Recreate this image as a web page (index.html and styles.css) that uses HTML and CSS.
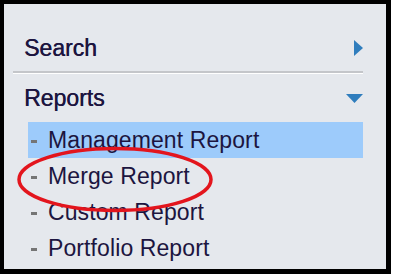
FILE: index.html
```html
<!DOCTYPE html>
<html lang="en">
<head>
  <meta charset="UTF-8">
  <title>Reports Menu</title>
  <link rel="stylesheet" href="styles.css">
</head>
<body>
  <div class="frame">
    <div class="panel">
      <div class="section-head">
        <span>Search</span>
        <svg class="arrow-right" width="9" height="16" viewBox="0 0 9 16"><polygon points="0,0 9,8 0,16" fill="#2f7dbd"/></svg>
      </div>
      <div class="separator"></div>
      <div class="section-head">
        <span>Reports</span>
        <svg class="arrow-down" width="17" height="9" viewBox="0 0 17 9"><polygon points="0,0 17,0 8.5,9" fill="#2f7dbd"/></svg>
      </div>
      <ul class="items">
        <li class="item active"><span class="dash"></span>Management Report</li>
        <li class="item"><span class="dash"></span>Merge Report</li>
        <li class="item"><span class="dash"></span>Custom Report</li>
        <li class="item"><span class="dash"></span>Portfolio Report</li>
      </ul>
    </div>
    <svg class="highlight-ring" width="200" height="70" viewBox="0 0 200 70">
      <ellipse cx="98" cy="33.5" rx="96" ry="31" fill="none" stroke="#e3151d" stroke-width="3.5"/>
    </svg>
  </div>
</body>
</html>
```

FILE: styles.css
```css
body {
  margin: 0;
  background-color: #fff;
  font-family: "Liberation Sans", Arial, sans-serif;
}

.frame {
  position: relative;
  box-sizing: border-box;
  width: 391px;
  height: 274px;
  border-style: solid;
  border-color: #000;
  border-width: 4px 5px 5px 4px;
  background-color: #e5e8ed;
  overflow: hidden;
}

.panel {
  padding: 29px 23px 0 9px;
  color: #1c1540;
}

.section-head {
  display: flex;
  justify-content: space-between;
  align-items: center;
  padding-left: 11px;
  font-size: 23px;
  line-height: 30px;
  text-shadow: 0.4px 0 0 #1c1540;
}

.separator {
  margin: 8px 0 9px;
  border-top: 2px solid #c4c6ca;
  border-bottom: 1px solid #fff;
}

.items {
  list-style: none;
  margin: 9px 0 0 15px;
  padding: 0;
}

.item {
  padding-left: 3px;
  font-size: 23px;
  line-height: 36px;
  letter-spacing: 0.1px;
  white-space: nowrap;
}

.item.active {
  background-color: #9dcbfb;
}

.dash {
  display: inline-block;
  width: 6px;
  height: 3px;
  margin: 0 11px 5px 0;
  background-color: #757575;
}

.highlight-ring {
  position: absolute;
  left: 13px;
  top: 142px;
}
```
